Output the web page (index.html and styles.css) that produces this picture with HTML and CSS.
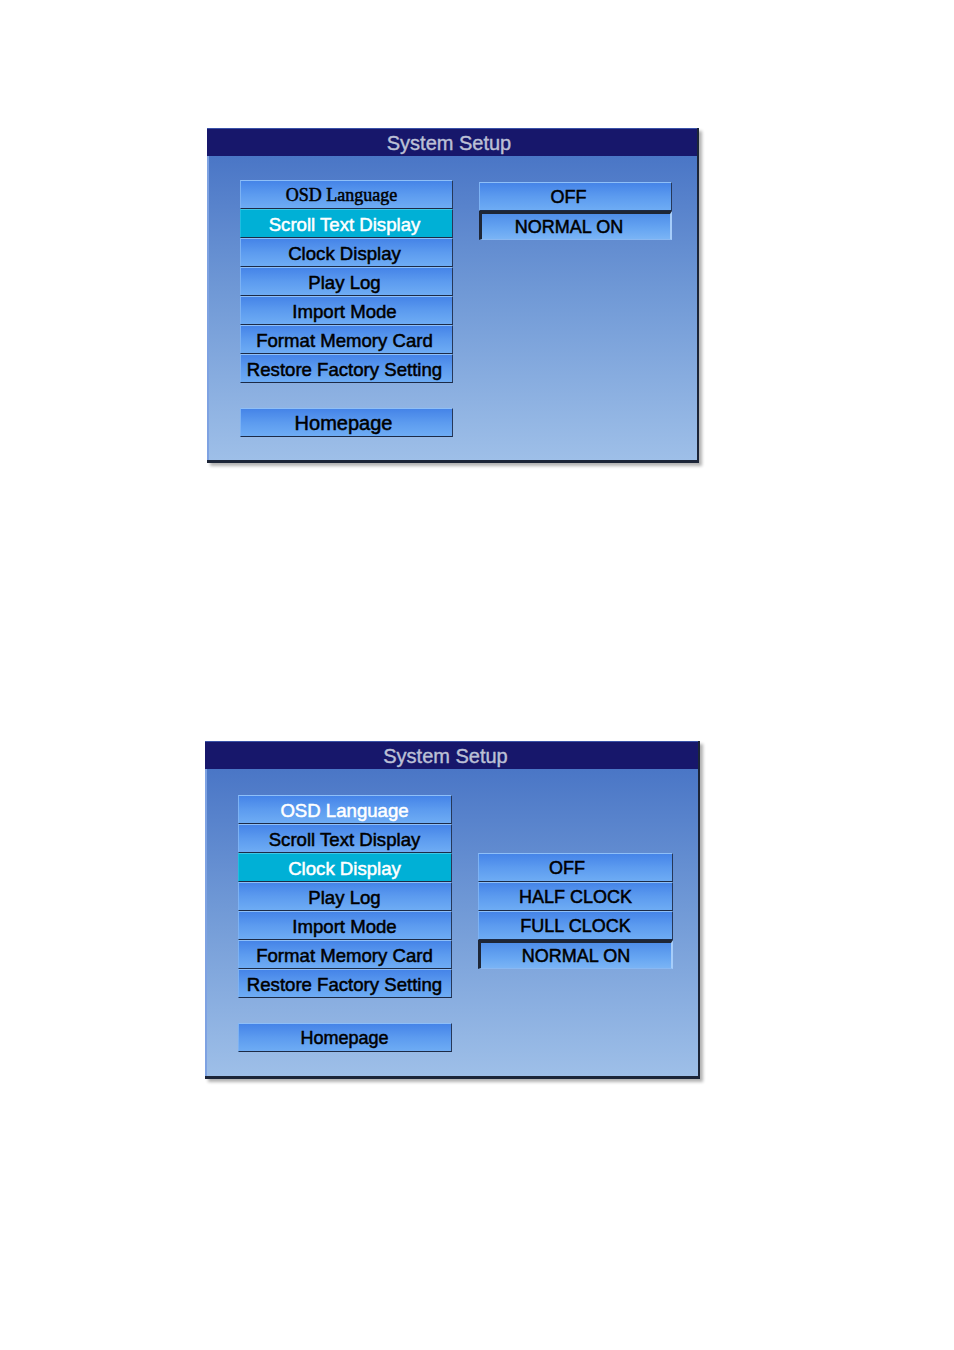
FILE: index.html
```html
<!DOCTYPE html>
<html>
<head>
<meta charset="utf-8">
<link rel="stylesheet" href="styles.css">
</head>
<body>
<div class="panel p1">
  <div class="title">System Setup</div>
  <div class="body">
    <div class="menu">
      <div class="btn serif">OSD Language</div>
      <div class="btn active">Scroll Text Display</div>
      <div class="btn">Clock Display</div>
      <div class="btn">Play Log</div>
      <div class="btn">Import Mode</div>
      <div class="btn">Format Memory Card</div>
      <div class="btn">Restore Factory Setting</div>
      <div class="btn home big">Homepage</div>
    </div>
    <div class="opts">
      <div class="btn">OFF</div>
      <div class="btn sel">NORMAL ON</div>
    </div>
  </div>
</div>

<div class="panel p2">
  <div class="title">System Setup</div>
  <div class="body">
    <div class="menu">
      <div class="btn white">OSD Language</div>
      <div class="btn">Scroll Text Display</div>
      <div class="btn active">Clock Display</div>
      <div class="btn">Play Log</div>
      <div class="btn">Import Mode</div>
      <div class="btn">Format Memory Card</div>
      <div class="btn">Restore Factory Setting</div>
      <div class="btn home">Homepage</div>
    </div>
    <div class="opts">
      <div class="btn off">OFF</div>
      <div class="btn">HALF CLOCK</div>
      <div class="btn">FULL CLOCK</div>
      <div class="btn sel">NORMAL ON</div>
    </div>
  </div>
</div>
</body>
</html>
```
FILE: styles.css
```css
html, body {
  margin: 0;
  padding: 0;
  background: #ffffff;
}
body {
  font-family: "Liberation Sans", Arial, sans-serif;
  padding-top: 128px;
  padding-bottom: 20px;
}
.panel {
  box-sizing: border-box;
  border-right: 2px solid #1c2538;
  border-bottom: 3px solid #1c2538;
  box-shadow: 3px 3px 3px rgba(0, 0, 0, 0.3);
}
.p1 {
  width: 492px;
  margin-left: 207px;
  --left: 213px;
  --right: 193px;
}
.p2 {
  width: 495px;
  margin-left: 205px;
  margin-top: 278px;
  --left: 214px;
  --right: 195px;
}
.title {
  box-sizing: border-box;
  height: 28px;
  background: #17176b;
  border-top: 1px solid #3a52a8;
  color: #bcc0d6;
  font-size: 20px;
  line-height: 28px;
  text-align: center;
  padding-right: 6px;
  -webkit-text-stroke: 0.4px #bcc0d6;
}
.p2 .title {
  padding-right: 12px;
}
.body {
  display: flex;
  align-items: flex-start;
  gap: 26px;
  background: linear-gradient(180deg, #4a76c6 0%, #7099d6 45%, #9ebfe8 100%);
  border-left: 2px solid #7ea2e2;
  padding: 24px 25px 23px 31px;
}
.p2 .body {
  padding-top: 26px;
  padding-bottom: 24px;
}
.menu {
  width: var(--left);
  display: flex;
  flex-direction: column;
}
.opts {
  width: var(--right);
  display: flex;
  flex-direction: column;
  margin-top: 2px;
}
.p2 .opts {
  margin-top: 58px;
}
.btn {
  box-sizing: border-box;
  height: 29px;
  background: linear-gradient(180deg, #4584e8 0%, #5c9bef 50%, #6eacf4 100%);
  border-top: 1px solid #8ebff8;
  border-left: 1px solid #7cb2f4;
  border-right: 1px solid #26385a;
  border-bottom: 1px solid #1c2a46;
  color: #000000;
  font-size: 18.6px;
  line-height: 29px;
  text-align: center;
  white-space: nowrap;
  padding-right: 4px;
  -webkit-text-stroke: 0.5px #000000;
}
.p2 .menu .btn {
  padding-right: 1px;
}
.opts .btn {
  font-size: 18px;
}
.p1 .opts .btn {
  padding-right: 14px;
}
.p2 .opts .btn {
  padding-right: 0;
}
.p2 .opts .btn.off {
  padding-right: 17px;
}
.btn.serif {
  font-family: "Liberation Serif", "Times New Roman", serif;
  font-size: 18px;
  padding-right: 10px;
  -webkit-text-stroke: 0.5px #000000;
}
.btn.white {
  color: #ffffff;
  -webkit-text-stroke: 0.5px #ffffff;
}
.btn.active {
  background: #00b0d6;
  border-top-color: #3cc8e8;
  border-left-color: #20bde0;
  color: #ffffff;
  -webkit-text-stroke: 0.5px #ffffff;
}
.btn.home {
  margin-top: 25px;
}
.p1 .btn.home {
  padding-right: 6px;
}
.p2 .btn.home {
  font-size: 18px;
}
.btn.big {
  font-size: 20px;
}
.btn.sel {
  border-top: 3px solid #1e2636;
  border-left: 3px solid #1e2636;
  border-right: 2px solid #a6cdfa;
  border-bottom: 1px solid #8ab8f2;
  line-height: 26px;
  background: linear-gradient(180deg, #4f8ee9 0%, #67a6f2 60%, #7ab4f5 100%);
}
```
